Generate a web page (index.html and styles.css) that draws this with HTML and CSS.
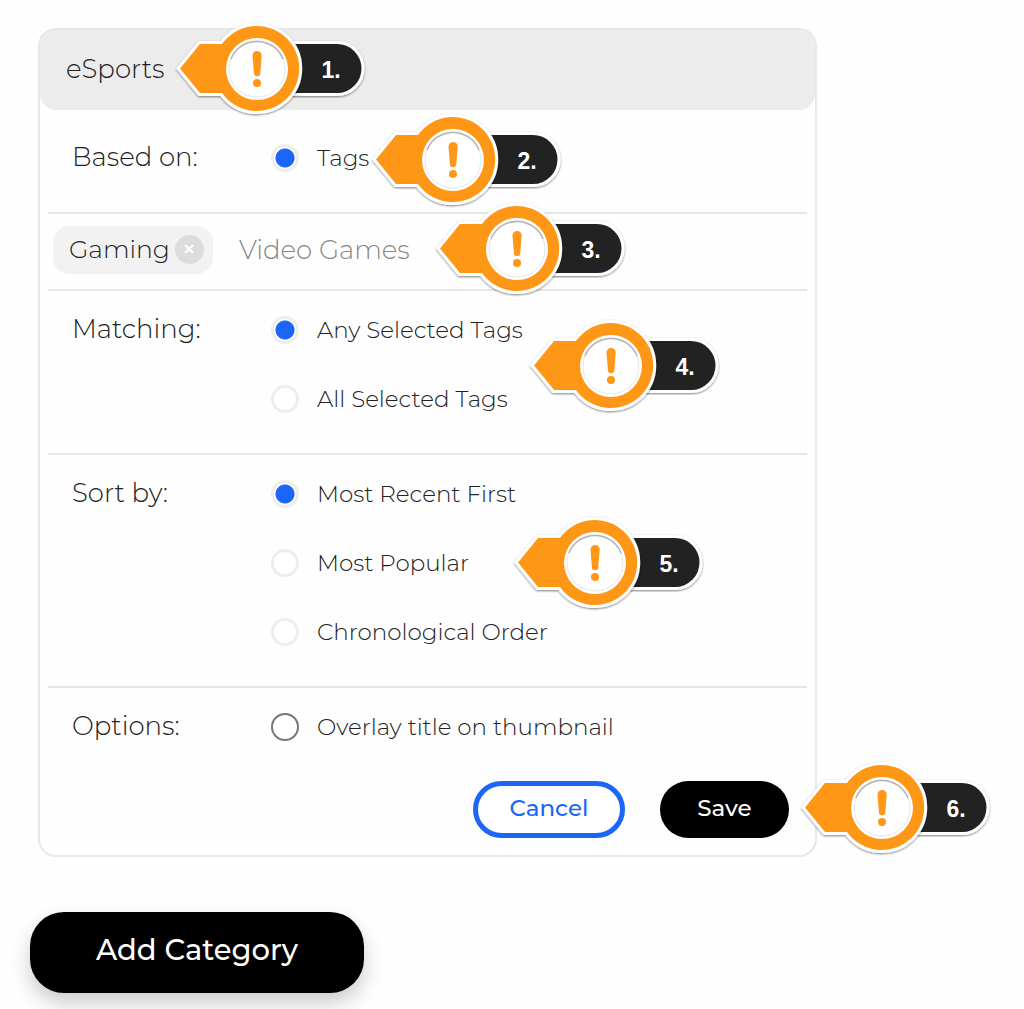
FILE: index.html
```html
<!DOCTYPE html>
<html lang="en">
<head>
    <meta charset="UTF-8">
    <meta name="viewport" content="width=device-width, initial-scale=1.0">
    <title>Edit Category</title>
    <link rel="stylesheet" href="styles.css">
</head>
<body>
    <!-- Shared marker shape -->
    <svg class="defs" width="0" height="0" aria-hidden="true">
        <defs>
            <filter id="marker-shadow" x="-10%" y="-10%" width="120%" height="120%">
                <feDropShadow dx="0" dy="1" stdDeviation="1" flood-color="#000" flood-opacity="0.5"/>
            </filter>
            <g id="marker-shape">
                <g filter="url(#marker-shadow)">
                    <path d="M110 25H165A24.500 24.500 0 0 1 165 74H110Z" fill="#222" stroke="#fff" stroke-width="6" stroke-linejoin="round" paint-order="stroke"/>
                </g>
                <g filter="url(#marker-shadow)">
                    <path d="M8 49.500L28 25H50A42.500 42.500 0 1 1 50 74H28Z" fill="#ff9718" stroke="#fff" stroke-width="6" paint-order="stroke"/>
                </g>
                <circle cx="85" cy="50" r="31" fill="#fff"/>
                <circle cx="85" cy="50" r="28" fill="none" stroke="#e6e6e6"/>
                <path d="M59 40A28 28 0 0 1 111 40" fill="none" stroke="#b4b4b4" stroke-width="1.500"/>
                <path d="M80.500 36.500A4.600 4.600 0 0 1 89.700 36.500L88.300 54A3.200 3.200 0 0 1 81.900 54Z" fill="#ff9718"/>
                <circle cx="85" cy="64" r="4" fill="#ff9718"/>
            </g>
        </defs>
    </svg>

    <main>
        <form class="card">
            <div class="card-header">
                <h2>eSports</h2>
                <svg class="marker marker-1" viewBox="0 0 196 100"><use href="#marker-shape"/><text x="159" y="59">1.</text></svg>
            </div>

            <div class="row row-first" role="radiogroup" aria-labelledby="based-label">
                <span class="row-label" id="based-label">Based on:</span>
                <div class="options">
                    <label class="option"><input type="radio" name="based" checked> Tags</label>
                </div>
                <svg class="marker marker-2" viewBox="0 0 196 100"><use href="#marker-shape"/><text x="159" y="59">2.</text></svg>
            </div>

            <div class="tags">
                <span class="chip">Gaming
                    <button type="button" class="chip-remove" aria-label="Remove Gaming">
                        <svg viewBox="0 0 10 10"><path d="M1 1L9 9M9 1L1 9"/></svg>
                    </button>
                </span>
                <input class="tag-input" type="text" placeholder="Video Games" aria-label="Add tag">
                <svg class="marker marker-3" viewBox="0 0 196 100"><use href="#marker-shape"/><text x="159" y="59">3.</text></svg>
            </div>

            <div class="row" role="radiogroup" aria-labelledby="matching-label">
                <span class="row-label" id="matching-label">Matching:</span>
                <div class="options">
                    <label class="option"><input type="radio" name="matching" checked> Any Selected Tags</label>
                    <label class="option"><input type="radio" name="matching"> All Selected Tags</label>
                </div>
                <svg class="marker marker-4" viewBox="0 0 196 100"><use href="#marker-shape"/><text x="159" y="59">4.</text></svg>
            </div>

            <div class="row" role="radiogroup" aria-labelledby="sort-label">
                <span class="row-label" id="sort-label">Sort by:</span>
                <div class="options">
                    <label class="option"><input type="radio" name="sort" checked> Most Recent First</label>
                    <label class="option"><input type="radio" name="sort"> Most Popular</label>
                    <label class="option"><input type="radio" name="sort"> Chronological Order</label>
                </div>
                <svg class="marker marker-5" viewBox="0 0 196 100"><use href="#marker-shape"/><text x="159" y="59">5.</text></svg>
            </div>

            <div class="row row-last">
                <span class="row-label">Options:</span>
                <div class="options">
                    <label class="option"><input type="checkbox" name="overlay"> Overlay title on thumbnail</label>
                </div>
            </div>

            <div class="actions">
                <button type="button" class="btn btn-cancel">Cancel</button>
                <button type="submit" class="btn btn-save">Save</button>
                <svg class="marker marker-6" viewBox="0 0 196 100"><use href="#marker-shape"/><text x="159" y="59">6.</text></svg>
            </div>
        </form>

        <button type="button" class="btn-add">Add Category</button>
    </main>
</body>
</html>
```
FILE: styles.css
```css
* {
    box-sizing: border-box;
}

body {
    margin: 0;
    background-color: #fefefe;
    color: #222;
    font-family: Gotham, Montserrat, Inter, sans-serif;
    font-weight: 300;
}

button, input {
    font: inherit;
}

.defs {
    position: absolute;
}

main {
    max-width: 825px;
    padding: 28px 8px 16px 30px;
}

.card {
    margin-left: 8px;
    border: 2px solid #e8e8e8;
    border-radius: 18px;
}

.card-header {
    position: relative;
    display: flex;
    align-items: center;
    height: 80px;
    padding: 0 26px 3px;
    background-color: #ececec;
    border-radius: 16px;
}

.card-header h2 {
    margin: 0;
    font-size: 26px;
    font-weight: 300;
}

.row {
    position: relative;
    display: flex;
    margin: 0 8px;
    padding: 25px 24px 40px;
    border-bottom: 2px solid #e6e6e6;
}

.row-first {
    padding-top: 34px;
}

.row-last {
    border-bottom: none;
}

.row-label {
    width: 199px;
    font-size: 26px;
    line-height: 26px;
}

.options {
    display: flex;
    flex-direction: column;
    gap: 41px;
}

.option {
    display: flex;
    align-items: center;
    gap: 18px;
    font-size: 23px;
    line-height: 28px;
}

.option input {
    appearance: none;
    width: 28px;
    height: 28px;
    margin: 0;
    border: 3px solid #eee;
    border-radius: 50%;
    background-color: #fff;
}

.option input:checked {
    background: radial-gradient(circle, #1b66f5 9px, #fff 10px);
}

.option input[type="checkbox"] {
    border: 2px solid #777;
}

.tags {
    position: relative;
    display: flex;
    align-items: center;
    gap: 26px;
    margin: 0 8px;
    padding: 12px 5px 15px;
    border-bottom: 2px solid #e6e6e6;
    font-size: 26px;
}

.chip {
    display: flex;
    align-items: center;
    gap: 5px;
    height: 48px;
    padding: 0 9px 2px 16px;
    background-color: #f2f2f2;
    border-radius: 16px;
    font-size: 25px;
}

.chip-remove {
    display: flex;
    align-items: center;
    justify-content: center;
    width: 29px;
    height: 29px;
    padding: 0;
    border: none;
    border-radius: 50%;
    background-color: #dcdcdc;
    cursor: pointer;
}

.chip-remove svg {
    width: 10px;
    height: 10px;
    stroke: #fff;
    stroke-width: 2;
}

.tag-input {
    flex: 1;
    min-width: 0;
    padding: 0;
    border: none;
    outline: none;
    background: none;
}

.tag-input::placeholder {
    color: #888;
    opacity: 1;
}

.actions {
    position: relative;
    display: flex;
    justify-content: flex-end;
    gap: 35px;
    margin: 0 8px;
    padding: 0 18px 17px;
}

.btn {
    height: 57px;
    padding: 0 0 4px;
    border-radius: 29px;
    font-size: 23px;
    font-weight: 500;
    cursor: pointer;
}

.btn-cancel {
    width: 152px;
    border: 5px solid #1b66f5;
    background-color: #fff;
    color: #1b66f5;
}

.btn-save {
    width: 129px;
    border: none;
    background-color: #000;
    color: #fff;
}

.btn-add {
    margin-top: 55px;
    padding: 20px 66px 25px;
    border: none;
    border-radius: 34px;
    background-color: #000;
    box-shadow: 0 10px 20px rgba(0, 0, 0, 0.2);
    color: #fff;
    font-size: 29px;
    font-weight: 500;
    line-height: 36px;
    cursor: pointer;
}

/* numbered markers, laid over the form */
.marker {
    position: absolute;
    z-index: 1;
    width: 196px;
    height: 100px;
    overflow: visible;
}

.marker text {
    fill: #fff;
    font-family: "Liberation Sans", Arial, sans-serif;
    font-size: 23px;
    font-weight: 700;
    text-anchor: middle;
}

.marker-1 {
    left: 132px;
    top: -11px;
}

.marker-2 {
    left: 320px;
    top: 0;
}

.marker-3 {
    left: 384px;
    top: -15px;
}

.marker-4 {
    left: 478px;
    top: 25px;
}

.marker-5 {
    left: 462px;
    top: 58px;
}

.marker-6 {
    right: -186px;
    top: -23px;
}
```
